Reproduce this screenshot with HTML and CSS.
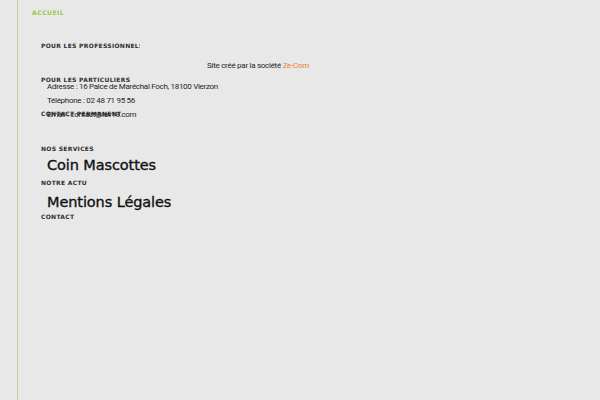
FILE: index.html
```html
<!DOCTYPE html>
<html lang="fr">
<head>
<meta charset="utf-8">
<link rel="stylesheet" href="styles.css">
</head>
<body>
<div class="page">
  <div class="rail"></div>
  <nav class="nav">
    <div class="home">ACCUEIL</div>
    <ul class="menu">
      <li>POUR LES PROFESSIONNELS</li>
      <li>POUR LES PARTICULIERS</li>
      <li>CONTACT PERMANENT</li>
      <li>NOS SERVICES</li>
      <li>NOTRE ACTU</li>
      <li>CONTACT</li>
    </ul>
  </nav>
  <footer class="footer">
    <p class="credit">Site créé par la société <span class="brand">Ze-Com</span></p>
    <p class="info first">Adresse : 16 Palce de Maréchal Foch, 18100 Vierzon</p>
    <p class="info">Téléphone : 02 48 71 95 56</p>
    <p class="info">Email : contact@lav18.com</p>
    <p class="big first-big">Coin Mascottes</p>
    <p class="big">Mentions Légales</p>
  </footer>
</div>
</body>
</html>
```
FILE: styles.css
```css
html, body {
  margin: 0;
  padding: 0;
  background: #e8e8e8;
}
.page {
  position: relative;
  width: 600px;
  height: 400px;
  overflow: hidden;
}
.rail {
  position: absolute;
  left: 17px;
  top: 0;
  width: 1px;
  height: 400px;
  background: #c9d18f;
}
.nav {
  padding: 8px 0 0 32px;
}
.home {
  font-family: "DejaVu Sans", sans-serif;
  font-size: 6.2px;
  font-weight: bold;
  letter-spacing: 0.4px;
  background: linear-gradient(90deg, #8fc43c, #d8e89a);
  -webkit-background-clip: text;
  background-clip: text;
  color: transparent;
  line-height: 9px;
}
.menu {
  list-style: none;
  margin: 0;
  padding: 0 0 0 9px;
  margin-top: 25px;
}
.menu li {
  width: 99px;
  overflow: hidden;
  white-space: nowrap;
  height: 34.2px;
  line-height: 8px;
  font-family: "DejaVu Sans", sans-serif;
  font-size: 6px;
  font-weight: bold;
  letter-spacing: 0.3px;
  color: #2e2e2e;
}
.footer {
  position: absolute;
  left: 0;
  top: 0;
  width: 600px;
  font-family: Roboto, "Liberation Sans", sans-serif;
  color: #1e1e1e;
}
.footer p { margin: 0; }
.credit {
  position: absolute;
  top: 61px;
  left: 0;
  width: 516px;
  text-align: center;
  font-size: 8px;
  letter-spacing: -0.28px;
  line-height: 10px;
}
.brand { color: #e8832a; }
.info {
  padding-left: 47px;
  font-size: 8px;
  letter-spacing: -0.3px;
  line-height: 14px;
}
.info.first { margin-top: 80px !important; }
.big {
  padding-left: 47px;
  font-family: "DejaVu Sans", sans-serif;
  font-size: 14.5px;
  line-height: 37px;
  letter-spacing: -0.1px;
  -webkit-text-stroke: 0.35px #111;
  color: #111;
}
.first-big { margin-top: 25px !important; }
```
